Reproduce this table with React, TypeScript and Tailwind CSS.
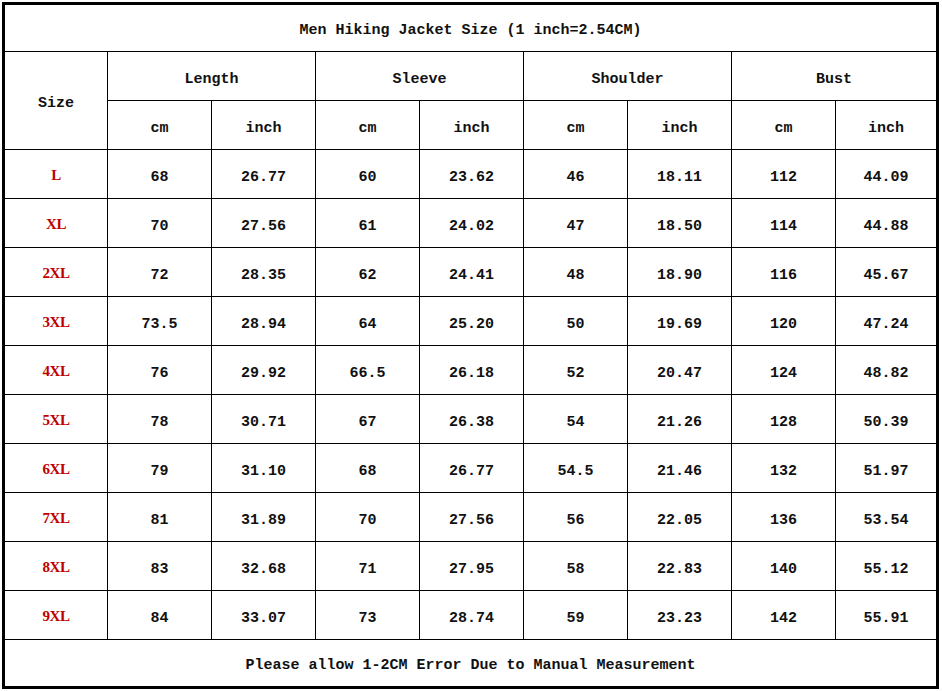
import React from "react"

type Row = { size: string; vals: string[] }

const rows: Row[] = [
  { size: "L", vals: ["68", "26.77", "60", "23.62", "46", "18.11", "112", "44.09"] },
  { size: "XL", vals: ["70", "27.56", "61", "24.02", "47", "18.50", "114", "44.88"] },
  { size: "2XL", vals: ["72", "28.35", "62", "24.41", "48", "18.90", "116", "45.67"] },
  { size: "3XL", vals: ["73.5", "28.94", "64", "25.20", "50", "19.69", "120", "47.24"] },
  { size: "4XL", vals: ["76", "29.92", "66.5", "26.18", "52", "20.47", "124", "48.82"] },
  { size: "5XL", vals: ["78", "30.71", "67", "26.38", "54", "21.26", "128", "50.39"] },
  { size: "6XL", vals: ["79", "31.10", "68", "26.77", "54.5", "21.46", "132", "51.97"] },
  { size: "7XL", vals: ["81", "31.89", "70", "27.56", "56", "22.05", "136", "53.54"] },
  { size: "8XL", vals: ["83", "32.68", "71", "27.95", "58", "22.83", "140", "55.12"] },
  { size: "9XL", vals: ["84", "33.07", "73", "28.74", "59", "23.23", "142", "55.91"] },
]

const groups = ["Length", "Sleeve", "Shoulder", "Bust"]

const base = "flex items-center justify-center bg-white"
// text sits a little below middle in the original sheet
const cell = `${base} pt-[8px]`

export default function App() {
  return (
    <div className="min-h-screen bg-white pl-[2px] pt-[2px]">
      <div
        className="grid w-[937px] h-[687px] gap-px border-[3px] border-black bg-black text-[15px] font-bold text-[#111] grid-cols-[102px_repeat(7,103px)_100px] grid-rows-[46px_repeat(12,48px)_46px]"
        style={{ fontFamily: '"Liberation Mono", "DejaVu Sans Mono", monospace' }}
      >
        {/* Title */}
        <div className={`${base} col-span-9 pt-[6px]`}>Men Hiking Jacket Size (1 inch=2.54CM)</div>

        {/* Header */}
        <div className={`${cell} row-span-2`}>Size</div>
        {groups.map((g) => (
          <div key={g} className={`${cell} col-span-2`}>
            {g}
          </div>
        ))}
        {groups.map((g) => (
          <React.Fragment key={g + "-u"}>
            <div className={cell}>cm</div>
            <div className={cell}>inch</div>
          </React.Fragment>
        ))}

        {/* Body */}
        {rows.map((r) => (
          <React.Fragment key={r.size}>
            <div
              className={`${base} pt-[3px] text-[15px] tracking-[-0.5px] text-[#c00000]`}
              style={{ fontFamily: '"Liberation Serif", "Times New Roman", serif' }}
            >
              {r.size}
            </div>
            {r.vals.map((v, i) => (
              <div key={i} className={cell}>
                {v}
              </div>
            ))}
          </React.Fragment>
        ))}

        {/* Footer */}
        <div className={`${base} col-span-9 pt-[6px]`}>Please allow 1-2CM Error Due to Manual Measurement</div>
      </div>
    </div>
  )
}
